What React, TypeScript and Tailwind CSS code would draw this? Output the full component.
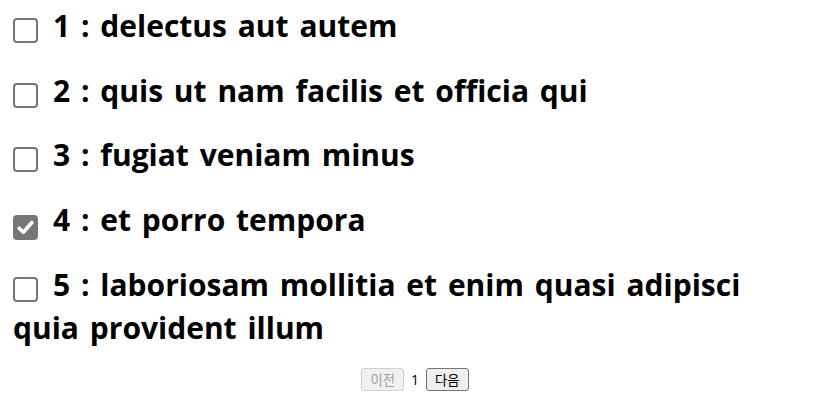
const TODOS = [
  { id: 1, title: 'delectus aut autem', completed: false },
  { id: 2, title: 'quis ut nam facilis et officia qui', completed: false },
  { id: 3, title: 'fugiat veniam minus', completed: false },
  { id: 4, title: 'et porro tempora', completed: true },
  { id: 5, title: 'laboriosam mollitia et enim quasi adipisci quia provident illum', completed: false },
]

function Check({ checked }: { checked: boolean }) {
  if (checked) {
    return (
      <span className="inline-flex items-center justify-center w-[25px] h-[25px] rounded-[4px] bg-[#767676] align-[-6px] mr-[15px]">
        <svg width="19" height="19" viewBox="0 0 16 16">
          <path d="M2.6 8.6 L6.2 12 L13.4 3.8" fill="none" stroke="#fff" strokeWidth="3" strokeLinecap="round" strokeLinejoin="round" />
        </svg>
      </span>
    )
  }
  return <span className="inline-block w-[25px] h-[25px] rounded-[4px] border-2 border-[#767676] bg-white align-[-6px] mr-[15px]" />
}

export default function App() {
  return (
    <div className="w-[840px] h-[401px] bg-white text-black" style={{ fontFamily: '"Open Sans", "Noto Sans CJK KR", sans-serif' }}>
      <div className="pl-[13px] pr-[40px] pt-[4px]">
        {TODOS.map((todo) => (
          <h1 key={todo.id} className="text-[30px] font-bold leading-[43px] mb-[21.67px] [word-spacing:3px]">
            <Check checked={todo.completed} />
            {`${todo.id} : ${todo.title}`}
          </h1>
        ))}
      </div>
      <div className="flex items-center justify-center gap-[7px] pr-[10px] -mt-[2px] text-[13.33px]" style={{ fontFamily: '"Noto Sans CJK KR", sans-serif' }}>
        <button disabled className="h-[23px] px-[8px] rounded-[3px] border border-[#d0d0d0] bg-[#f0f0f0] text-[#a0a0a0]">이전</button>
        <span className="text-[14px]" style={{ fontFamily: '"Open Sans", sans-serif' }}>1</span>
        <button className="h-[23px] px-[8px] rounded-[3px] border border-[#767676] bg-[#efefef]">다음</button>
      </div>
    </div>
  )
}
